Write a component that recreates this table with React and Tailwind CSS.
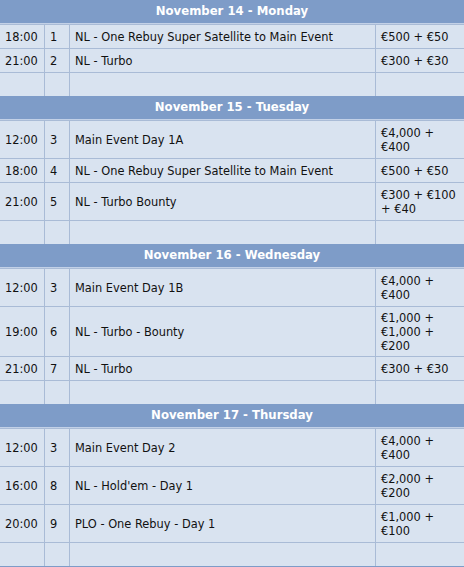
const days = [
  {
    title: "November 14 - Monday",
    rows: [
      ["18:00", "1", "NL - One Rebuy Super Satellite to Main Event", ["€500 + €50"]],
      ["21:00", "2", "NL - Turbo", ["€300 + €30"]],
      ["", "", "", []],
    ],
  },
  {
    title: "November 15 - Tuesday",
    rows: [
      ["12:00", "3", "Main Event Day 1A", ["€4,000 +", "€400"]],
      ["18:00", "4", "NL - One Rebuy Super Satellite to Main Event", ["€500 + €50"]],
      ["21:00", "5", "NL - Turbo Bounty", ["€300 + €100", "+ €40"]],
      ["", "", "", []],
    ],
  },
  {
    title: "November 16 - Wednesday",
    rows: [
      ["12:00", "3", "Main Event Day 1B", ["€4,000 +", "€400"]],
      ["19:00", "6", "NL - Turbo - Bounty", ["€1,000 +", "€1,000 +", "€200"]],
      ["21:00", "7", "NL - Turbo", ["€300 + €30"]],
      ["", "", "", []],
    ],
  },
  {
    title: "November 17 - Thursday",
    rows: [
      ["12:00", "3", "Main Event Day 2", ["€4,000 +", "€400"]],
      ["16:00", "8", "NL - Hold'em - Day 1", ["€2,000 +", "€200"]],
      ["20:00", "9", "PLO - One Rebuy - Day 1", ["€1,000 +", "€100"]],
      ["", "", "", []],
    ],
  },
];

function Cell({ children, tight }) {
  return (
    <div
      className={
        tight
          ? "bg-[#d9e3f0] px-[5px] pt-[4px] pb-[3px] flex items-center min-h-[23px]"
          : "bg-[#d9e3f0] px-[5px] pt-[5px] pb-[4px] flex items-center min-h-[23px]"
      }
    >
      <div>{children}</div>
    </div>
  );
}

export default function App() {
  return (
    <div
      className="w-[464px] h-[567px] overflow-hidden bg-[#a9bbd6] text-[11.4px] leading-[14px] text-[#111]"
      style={{ fontFamily: '"DejaVu Sans", Verdana, sans-serif' }}
    >
      {days.concat([{ title: "", rows: [] }]).map((day, i) => (
        <div key={i}>
          <div className="h-[24px] bg-[#7e9cc8] border-b border-[#c3d1e7] flex items-center justify-center pb-px font-bold text-white text-[11.7px]">
            {day.title}
          </div>
          {day.rows.map((r, j) => {
            const tight = r[3].length > 2;
            return (
              <div
                key={j}
                className="grid grid-cols-[44px_24px_305px_88px] gap-x-px pt-px bg-[#a9bbd6]"
              >
                <Cell tight={tight}>{r[0]}</Cell>
                <Cell tight={tight}>{r[1]}</Cell>
                <Cell tight={tight}>{r[2]}</Cell>
                <Cell tight={tight}>
                  {r[3].map((line, k) => (
                    <div key={k}>{line}</div>
                  ))}
                </Cell>
              </div>
            );
          })}
        </div>
      ))}
    </div>
  );
}
